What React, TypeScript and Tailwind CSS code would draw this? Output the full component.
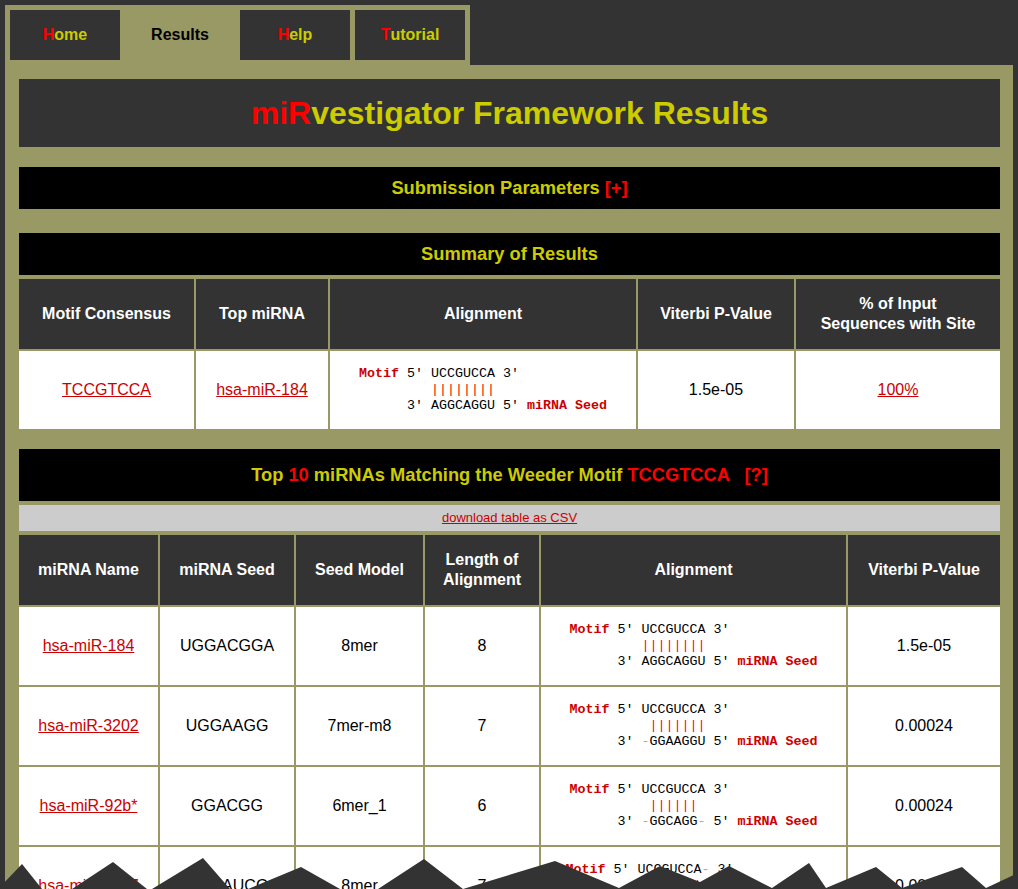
import React from "react";

const RED = "text-[#cc0000]";

function Tab({ label, active }: { label: string; active?: boolean }) {
  if (active) {
    return (
      <div className="w-[110px] h-[50px] flex items-center justify-center text-[16px] font-bold text-black">
        {label}
      </div>
    );
  }
  return (
    <div className="w-[110px] h-[50px] bg-[#333333] flex items-center justify-center text-[16px] font-bold text-[#cccc00]">
      <span className="text-[#ff0000]">{label[0]}</span>
      {label.slice(1)}
    </div>
  );
}

function Motif() {
  return <span className="font-bold text-[#cc0000]">Motif</span>;
}
function Seed() {
  return <span className="font-bold text-[#cc0000]">miRNA Seed</span>;
}
function Dash() {
  return <span className="text-[#aaaaaa]">-</span>;
}
function Bars({ s }: { s: string }) {
  return <div className="text-[#ff0000]">{s}</div>;
}

function Aln({ children }: { children: React.ReactNode }) {
  return (
    <div className="whitespace-pre text-left text-black text-[13.33px] leading-[16px] [font-family:'Liberation_Mono','Courier_New',monospace]">
      {children}
    </div>
  );
}

function Head({ children }: { children: React.ReactNode }) {
  return (
    <div className="bg-[#333333] flex items-center justify-center text-center text-white font-bold text-[16px] leading-[20px]">
      {children}
    </div>
  );
}

function Cell({ children }: { children: React.ReactNode }) {
  return (
    <div className="bg-white flex items-center justify-center text-center text-black text-[16px]">
      {children}
    </div>
  );
}

function Link({ children }: { children: React.ReactNode }) {
  return <span className={`${RED} underline`}>{children}</span>;
}

const rows = [
  {
    name: "hsa-miR-184",
    seed: "UGGACGGA",
    model: "8mer",
    len: "8",
    p: "1.5e-05",
    aln: (
      <Aln>
        <div>
          <Motif />
          {" 5' UCCGUCCA 3'"}
        </div>
        <Bars s={"         ||||||||"} />
        <div>
          {"      3' AGGCAGGU 5' "}
          <Seed />
        </div>
      </Aln>
    ),
  },
  {
    name: "hsa-miR-3202",
    seed: "UGGAAGG",
    model: "7mer-m8",
    len: "7",
    p: "0.00024",
    aln: (
      <Aln>
        <div>
          <Motif />
          {" 5' UCCGUCCA 3'"}
        </div>
        <Bars s={"          |||||||"} />
        <div>
          {"      3' "}
          <Dash />
          {"GGAAGGU 5' "}
          <Seed />
        </div>
      </Aln>
    ),
  },
  {
    name: "hsa-miR-92b*",
    seed: "GGACGG",
    model: "6mer_1",
    len: "6",
    p: "0.00024",
    aln: (
      <Aln>
        <div>
          <Motif />
          {" 5' UCCGUCCA 3'"}
        </div>
        <Bars s={"          ||||||"} />
        <div>
          {"      3' "}
          <Dash />
          {"GGCAGG"}
          <Dash />
          {" 5' "}
          <Seed />
        </div>
      </Aln>
    ),
  },
  {
    name: "hsa-miR-4487",
    seed: "UGGAUCG",
    model: "8mer",
    len: "7",
    p: "0.00055",
    aln: (
      <Aln>
        <div>
          <Motif />
          {" 5' UCCGUCCA"}
          <Dash />
          {" 3'"}
        </div>
        <Bars s={"          |||||||"} />
        <div>
          {"      3' AGGCAGGU"}
          <Dash />
          {" 5' "}
          <Seed />
        </div>
      </Aln>
    ),
  },
];

export default function App() {
  return (
    <div className="relative h-[889px] overflow-hidden bg-[#333333] pt-[5px] px-[5px] [font-family:'Liberation_Sans',Arial,sans-serif]">
      {/* tab bar */}
      <div className="w-[465px] bg-[#999966] p-[5px] flex gap-[5px]">
        <Tab label="Home" />
        <Tab label="Results" active />
        <Tab label="Help" />
        <Tab label="Tutorial" />
      </div>

      {/* main panel */}
      <div className="bg-[#999966] pt-[14px] pl-[14px] pr-[13px] pb-[40px] flex flex-col">
        <div className="h-[68px] bg-[#333333] flex items-center justify-center text-[32px] font-bold text-[#cccc00]">
          <span className="text-[#ff0000]">miR</span>vestigator Framework Results
        </div>

        <div className="mt-[20px] h-[42px] bg-black flex items-center justify-center text-[18.3px] font-bold text-[#cccc00]">
          Submission Parameters&nbsp;<span className="text-[#ff0000]">[+]</span>
        </div>

        <div className="mt-[24px] h-[42px] bg-black flex items-center justify-center text-[18.3px] font-bold text-[#cccc00]">
          Summary of Results
        </div>

        <div className="mt-[4px] grid grid-cols-[175px_132px_306px_156px_1fr] grid-rows-[70px_78px] gap-[2px]">
          <Head>Motif Consensus</Head>
          <Head>Top miRNA</Head>
          <Head>Alignment</Head>
          <Head>Viterbi P-Value</Head>
          <Head>
            % of Input
            <br />
            Sequences with Site
          </Head>
          <Cell>
            <Link>TCCGTCCA</Link>
          </Cell>
          <Cell>
            <Link>hsa-miR-184</Link>
          </Cell>
          <Cell>{rows[0].aln}</Cell>
          <Cell>1.5e-05</Cell>
          <Cell>
            <Link>100%</Link>
          </Cell>
        </div>

        <div className="mt-[20px] h-[52px] bg-black flex items-center justify-center text-[18.3px] font-bold text-[#cccc00] whitespace-pre">
          Top <span className="text-[#ff0000]">10</span> miRNAs Matching the Weeder Motif{" "}
          <span className="text-[#ff0000]">{"TCCGTCCA   [?]"}</span>
        </div>

        <div className="mt-[4px] h-[26px] bg-[#cccccc] flex items-center justify-center text-[13px]">
          <Link>download table as CSV</Link>
        </div>

        <div className="mt-[4px] grid grid-cols-[139px_134px_127px_114px_305px_1fr] grid-rows-[70px] auto-rows-[78px] gap-[2px]">
          <Head>miRNA Name</Head>
          <Head>miRNA Seed</Head>
          <Head>Seed Model</Head>
          <Head>
            Length of
            <br />
            Alignment
          </Head>
          <Head>Alignment</Head>
          <Head>Viterbi P-Value</Head>
          {rows.map((r) => (
            <React.Fragment key={r.name}>
              <Cell>
                <Link>{r.name}</Link>
              </Cell>
              <Cell>{r.seed}</Cell>
              <Cell>{r.model}</Cell>
              <Cell>{r.len}</Cell>
              <Cell>{r.aln}</Cell>
              <Cell>{r.p}</Cell>
            </React.Fragment>
          ))}
        </div>
      </div>

      {/* torn edge overlay */}
      <svg
        className="absolute left-0 top-[840px]"
        width="1018"
        height="49"
        viewBox="0 840 1018 49"
      >
        <polygon
          fill="#333333"
          points="0,889 0,887 22,864 42,889 72,889 113,862 147,889 152,889 203,858 230,889 248,889 301,867 340,889 378,889 424,859 463,889 555,861 619,888 660,866 700,882 729,866 772,888 809,863 826,888 876,867 902,888 962,867 986,888 1018,873 1018,889"
        />
      </svg>
    </div>
  );
}
